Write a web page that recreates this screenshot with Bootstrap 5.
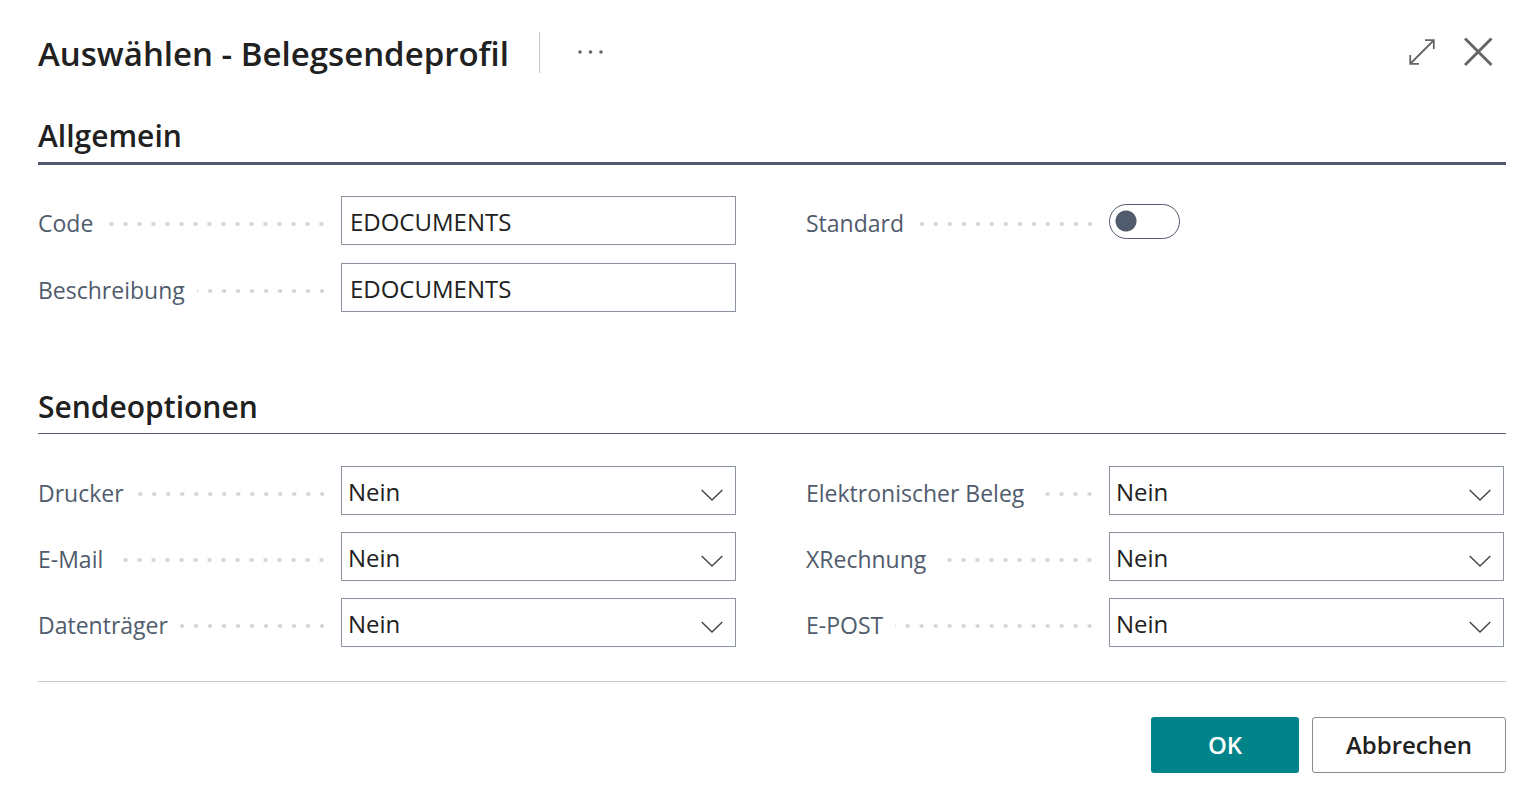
<!DOCTYPE html>
<html lang="de">
<head>
<meta charset="utf-8">
<meta name="viewport" content="width=device-width, initial-scale=1">
<title>Auswählen - Belegsendeprofil</title>
<link href="https://cdn.jsdelivr.net/npm/bootstrap@5.3.0/dist/css/bootstrap.min.css" rel="stylesheet">
<style>
  :root { --ink: #212121; --slate: #505c6d; --edge: #8b93a0; --teal: #00848a; }
  body { font-family: "Segoe UI", "Open Sans", sans-serif; font-size: 24px; line-height: 32px; color: var(--ink); background: #fff; }
  .dialog-page { padding: 28px 33px 24px 38px; }
  .dialog-title { font-size: 33px; line-height: 44px; font-weight: 600; padding-top: 4px; }
  .title-rule { width: 1px; height: 41px; margin-left: 30px; background: #c8c8c8; }
  .icon-btn { border: 0; padding: 0; background: none; color: #666; display: flex; }
  .more-btn { margin-left: 36px; }
  .max-btn { margin-right: 28px; }
  .section-title { font-size: 30px; line-height: 40px; font-weight: 600; padding-bottom: 6px; border-bottom: 1px solid var(--slate); }
  .section-title.active { border-bottom-width: 3px; }
  .section-general { margin-top: 40px; }
  .section-send { margin-top: 75px; }
  .field-grid { --bs-gutter-x: 70px; margin-top: 32px; padding-right: 2px; }
  .section-general .field-grid { margin-top: 31px; }
  .field-stack { gap: 18px; }
  .section-send .field-stack { gap: 17px; }
  .field-line { height: 49px; }
  .field-name { width: 43.4%; font-size: 23px; color: var(--slate); padding-top: 4px; }
  .leader { height: 4px; margin: 2px 17px 0 12px;
    background: radial-gradient(circle at 12px 2px, #ccd0d6 1px, transparent 3px) right top / 14px 4px repeat-x; }
  .field-box { width: 56.6%; }
  .field-box .form-control, .field-box .form-select { height: 49px; padding: 5px 8px 3px; font-size: 24px; line-height: 36px; color: var(--ink); border: 1px solid var(--edge); border-radius: 0; background-color: #fff; }
  .field-box .form-select { padding: 5px 40px 3px 6px;
    background-image: url("data:image/svg+xml,%3Csvg xmlns='http://www.w3.org/2000/svg' viewBox='0 0 22 12'%3E%3Cpath d='M.7.9 11 11 21.300.9' fill='none' stroke='%23444' stroke-width='1.400'/%3E%3C/svg%3E");
    background-size: 22px 12px; background-position: right 12px top 22px; }
  .toggle { appearance: none; display: block; width: 71px; height: 35px; margin: 2px 0 0; border: 1px solid var(--slate); border-radius: 18px;
    background: radial-gradient(circle at 16px 16px, var(--slate) 10px, transparent 11px); }
  .dialog-foot { margin-top: 34px; padding-top: 35px; border-top: 1px solid #c8c8c8; gap: 13px; }
  .foot-btn { height: 56px; padding: 0 32px; font-size: 24px; font-weight: 600; border-radius: 3px; }
  .foot-ok { min-width: 148px; color: #fff; background: var(--teal); }
  .foot-cancel { min-width: 194px; color: var(--ink); border-color: #8a8a8a; background: #fff; }
</style>
</head>
<body>
<main class="dialog-page">
  <header class="d-flex align-items-center">
    <h1 class="dialog-title mb-0">Auswählen - Belegsendeprofil</h1>
    <div class="title-rule"></div>
    <button class="icon-btn more-btn" type="button" aria-label="Weitere Optionen">
      <svg width="30" height="8" viewBox="0 0 30 8" fill="currentColor"><circle cx="4" cy="4" r="1.800"/><circle cx="14.500" cy="4" r="1.800"/><circle cx="25" cy="4" r="1.800"/></svg>
    </button>
    <div class="d-flex align-items-center ms-auto">
      <button class="icon-btn max-btn" type="button" aria-label="Maximieren">
        <svg width="28" height="28" viewBox="0 0 28 28" fill="none" stroke="currentColor" stroke-width="1.800"><path d="M2.500 25.500 25.500 2.500M17 2.200h8.800V11M2.200 17v8.800H11"/></svg>
      </button>
      <button class="icon-btn" type="button" aria-label="Schließen">
        <svg width="42" height="30" viewBox="0 0 42 30" fill="none" stroke="currentColor" stroke-width="3"><path d="M1 1.500 27.500 28M27.500 1.500 1 28"/></svg>
      </button>
    </div>
  </header>

  <form>
    <section class="section-general">
      <h2 class="section-title active m-0">Allgemein</h2>
      <div class="row field-grid">
        <div class="col-6 d-flex flex-column field-stack">
          <div class="field-line d-flex">
            <div class="field-name d-flex align-items-center"><label for="code">Code</label><span class="leader flex-grow-1"></span></div>
            <div class="field-box"><input class="form-control" id="code" type="text" value="EDOCUMENTS"></div>
          </div>
          <div class="field-line d-flex">
            <div class="field-name d-flex align-items-center"><label for="desc">Beschreibung</label><span class="leader flex-grow-1"></span></div>
            <div class="field-box"><input class="form-control" id="desc" type="text" value="EDOCUMENTS"></div>
          </div>
        </div>
        <div class="col-6">
          <div class="field-line d-flex">
            <div class="field-name d-flex align-items-center"><label for="std">Standard</label><span class="leader flex-grow-1"></span></div>
            <div class="field-box d-flex align-items-center"><input class="toggle" id="std" type="checkbox" role="switch"></div>
          </div>
        </div>
      </div>
    </section>

    <section class="section-send">
      <h2 class="section-title m-0">Sendeoptionen</h2>
      <div class="row field-grid">
        <div class="col-6 d-flex flex-column field-stack">
          <div class="field-line d-flex">
            <div class="field-name d-flex align-items-center"><label for="printer">Drucker</label><span class="leader flex-grow-1"></span></div>
            <div class="field-box"><select class="form-select" id="printer"><option>Nein</option></select></div>
          </div>
          <div class="field-line d-flex">
            <div class="field-name d-flex align-items-center"><label for="mail">E-Mail</label><span class="leader flex-grow-1"></span></div>
            <div class="field-box"><select class="form-select" id="mail"><option>Nein</option></select></div>
          </div>
          <div class="field-line d-flex">
            <div class="field-name d-flex align-items-center"><label for="disk">Datenträger</label><span class="leader flex-grow-1"></span></div>
            <div class="field-box"><select class="form-select" id="disk"><option>Nein</option></select></div>
          </div>
        </div>
        <div class="col-6 d-flex flex-column field-stack">
          <div class="field-line d-flex">
            <div class="field-name d-flex align-items-center"><label for="edoc">Elektronischer Beleg</label><span class="leader flex-grow-1"></span></div>
            <div class="field-box"><select class="form-select" id="edoc"><option>Nein</option></select></div>
          </div>
          <div class="field-line d-flex">
            <div class="field-name d-flex align-items-center"><label for="xr">XRechnung</label><span class="leader flex-grow-1"></span></div>
            <div class="field-box"><select class="form-select" id="xr"><option>Nein</option></select></div>
          </div>
          <div class="field-line d-flex">
            <div class="field-name d-flex align-items-center"><label for="epost">E-POST</label><span class="leader flex-grow-1"></span></div>
            <div class="field-box"><select class="form-select" id="epost"><option>Nein</option></select></div>
          </div>
        </div>
      </div>
    </section>

    <footer class="dialog-foot d-flex justify-content-end">
      <button class="btn foot-btn foot-ok" type="submit">OK</button>
      <button class="btn foot-btn foot-cancel" type="button">Abbrechen</button>
    </footer>
  </form>
</main>
<script src="https://cdn.jsdelivr.net/npm/bootstrap@5.3.0/dist/js/bootstrap.bundle.min.js"></script>
</body>
</html>
